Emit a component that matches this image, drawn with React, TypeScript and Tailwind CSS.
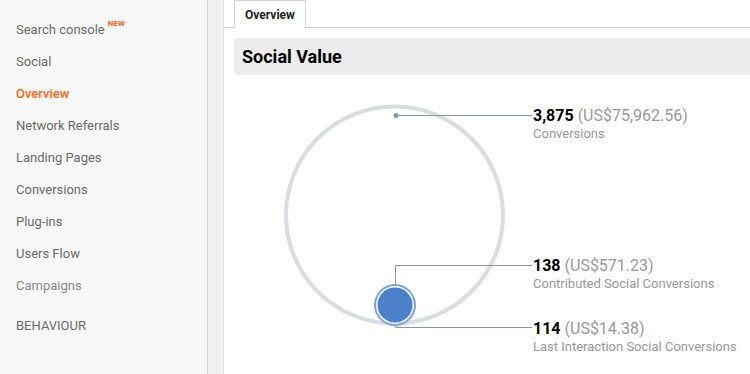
import React from "react";

const items = [
  { label: "Search console", badge: true },
  { label: "Social" },
  { label: "Overview", active: true },
  { label: "Network Referrals" },
  { label: "Landing Pages" },
  { label: "Conversions" },
  { label: "Plug-ins" },
  { label: "Users Flow" },
];

function Label({ top, num, money, sub }: { top: number; num: string; money: string; sub: string }) {
  return (
    <div className="absolute left-[309px] flex flex-col" style={{ top }}>
      <div className="h-5 leading-5 text-[16px] whitespace-nowrap">
        <span className="font-bold text-black">{num}</span>
        <span className="text-[#999999]"> ({money})</span>
      </div>
      <div className="h-4 leading-4 text-[13px] text-[#999999] whitespace-nowrap">{sub}</div>
    </div>
  );
}

export default function App() {
  return (
    <div className="flex h-[374px] w-[750px] overflow-hidden bg-white font-['Roboto',_'Liberation_Sans',_sans-serif]">
      <aside className="w-[208px] shrink-0 bg-[#f8f8f8] pt-[14px] pl-4 text-[13px] text-[#6a6a6a] border-r border-[#d9d9d9]">
        {items.map((it) => (
          <div key={it.label} className="h-8 flex items-center">
            <span className={it.active ? "text-[#ff6611] font-medium" : ""}>{it.label}</span>
            {it.badge && (
              <span className="ml-[3px] -mt-[12px] text-[8px] font-bold text-[#ff6611]">NEW</span>
            )}
          </div>
        ))}
        <div className="h-8 flex items-center text-[#888888]">Campaigns</div>
        <div className="h-8 mt-2 flex items-center">BEHAVIOUR</div>
      </aside>
      <div className="w-[16px] shrink-0 bg-[#f1f1f1] border-r border-[#e3e3e3]" />
      <main className="flex-1 flex flex-col">
        <div className="h-[28px] flex border-b border-[#cfcfcf] pl-[10px]">
          <div className="w-[72px] h-[28px] -mb-px bg-white border border-b-0 border-[#d5d5d5] flex items-center justify-center text-[12px] font-bold text-[#222222]">
            Overview
          </div>
        </div>
        <div className="mt-[10px] ml-[10px] h-[37px] rounded-l-[4px] bg-[#ececec] flex items-center pl-2 text-[18px] font-bold text-black">
          Social Value
        </div>
        <div className="relative flex-1">
          <svg width="526" height="299" className="absolute left-0 top-0">
            <circle cx="170.5" cy="140" r="108.5" fill="none" stroke="#d8dde1" strokeWidth="4" />
            <path d="M172 40.5 H308" stroke="#8797aa" strokeWidth="1" fill="none" />
            <circle cx="172" cy="40.5" r="2.5" fill="#8797aa" />
            <path d="M171.5 230 V190.5 H308" stroke="#8797aa" strokeWidth="1" fill="none" />
            <path d="M171.5 248 V252.5 H308" stroke="#8797aa" strokeWidth="1" fill="none" />
            <circle cx="171" cy="230" r="21" fill="#7ea2db" />
            <circle cx="171" cy="230" r="19" fill="#ffffff" />
            <circle cx="171" cy="230" r="17.5" fill="#4c80cb" />
          </svg>
          <Label top={31} num="3,875" money="US$75,962.56" sub="Conversions" />
          <Label top={181} num="138" money="US$571.23" sub="Contributed Social Conversions" />
          <Label top={244} num="114" money="US$14.38" sub="Last Interaction Social Conversions" />
        </div>
      </main>
    </div>
  );
}
